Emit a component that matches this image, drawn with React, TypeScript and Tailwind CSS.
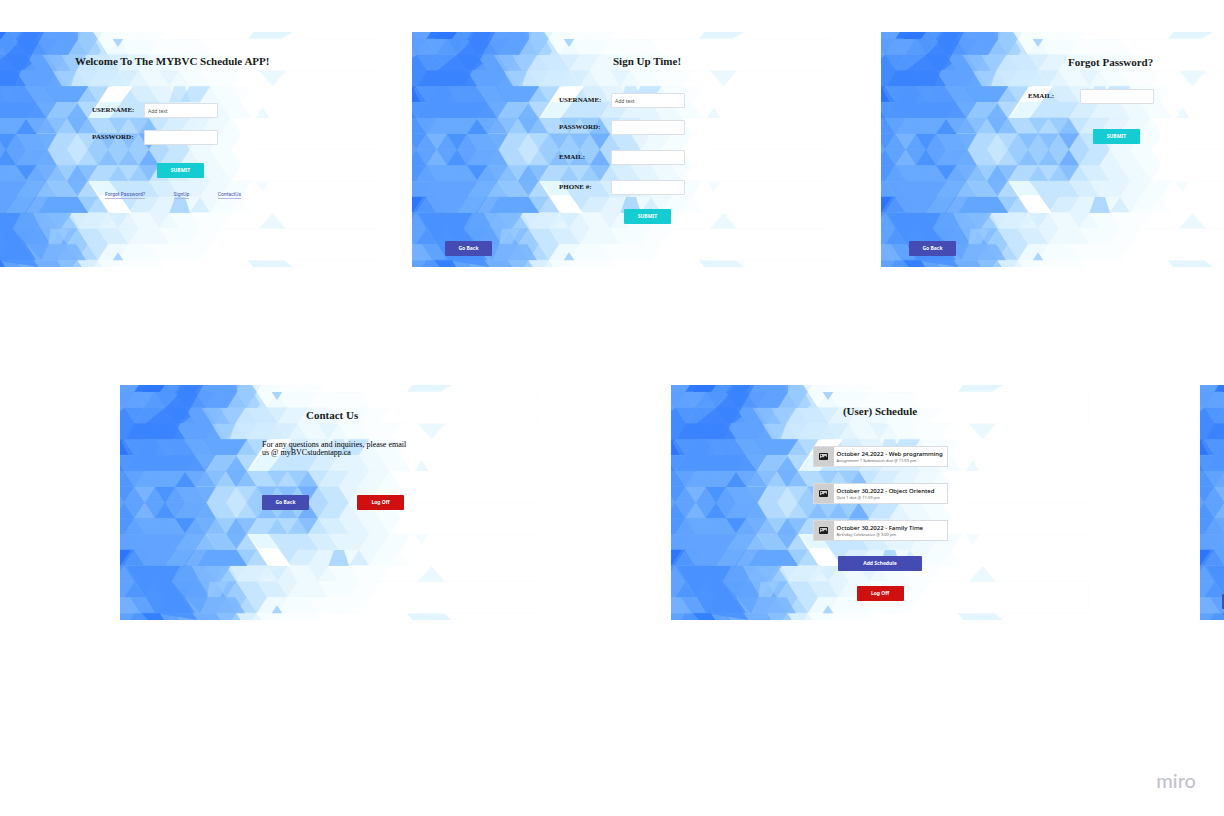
import type { InputHTMLAttributes, ReactNode } from "react";

const SHADES: Record<string, string> = {
  "0": "#307bff",
  "1": "#3f88ff",
  "2": "#5096ff",
  "3": "#5fa2ff",
  "4": "#72afff",
  "5": "#88bfff",
  "6": "#9ccdff",
  "7": "#b2daff",
  "8": "#c6e5ff",
  "9": "#d7eeff",
  a: "#e4f5ff",
  b: "#eefaff",
  c: "#f6fdff",
  d: "#fbfeff",
};

// One string per band of triangles, one shade per triangle, left to right.
// A dot leaves the white ground bare.
const BANDS = [
  "33300221144456accdddd",
  "333322211344568cbcccddddd",
  "32222211335667889aabbbcccdd",
  "2211111333457899a9abbabccddd",
  "012223223344467..899aab88bccd",
  "12222222346657..888899aaabbcc",
  "22333332445645776765899aabbc",
  "32343234457787656564788abbcc",
  "32343234457787656564788abbcc",
  "22333332445645776765899aabbc",
  "33333334456657..888899aaabbcc",
  "112333334444467..899aaab9bccd",
  "232222233456899a9abbabccddd",
  "33223222334568899abbbcccdd",
  "443332224445678bbcccddddd",
  "33222334444569accdddd",
];

const STEP = 30.65;
const BAND = 47.4;
const nodeX = (j: number) => 13 + STEP * j;
const lineY = (r: number) => 21 + BAND * (r - 1);

// Larger facets laid over the triangle bands: points, fill, opacity.
const FACETS: [string, string, number][] = [
  ["250,0 350,0 352,21 322,69 206,69", "#5a9cff", 0.75],
  ["352,0 388,0 420,58 412,69 345,69 322,69 352,21", "#94c8ff", 0.6],
  ["190,0 250,0 206,80 180,116 160,163 20,163 45,116 75,116 135,69 165,40", "#3982ff", 0.8],
  ["85,0 135,0 120,21 66,21", "#2d78ff", 1],
  ["105,21 135,69 75,69", "#5b9eff", 0.6],
  ["0,21 44,21 14,69 0,50", "#5b9dff", 0.6],
  ["0,78 14,69 45,116 20,163 0,163", "#3f88ff", 0.8],
  ["185,116 245,69 300,163 215,163", "#5fa2ff", 0.8],
  ["245,69 300,69 330,116 275,116", "#84bcff", 0.8],
  ["275,116 350,116 330,163 304,163", "#a4d1ff", 0.8],
  ["300,69 375,69 350,116 330,116", "#9bcbff", 0.8],
  ["375,69 440,69 500,163 330,163 345,116", "#cfeaff", 0.75],
  ["0,163 25,210 0,210", "#2c76ff", 1],
  ["75,163 190,163 255,258 20,258 20,250", "#4f95ff", 0.85],
  ["105,163 190,163 220,210 135,210", "#5a9dff", 0.5],
  ["190,163 250,163 285,210 257,258", "#69a9ff", 0.85],
  ["250,163 382,163 350,210 280,210", "#5fa5ff", 0.85],
  ["288,210 345,210 318,258 262,258", "#8ec4ff", 0.8],
  ["348,216 378,258 348,306 318,258", "#74b3ff", 0.9],
  ["75,258 257,258 226,306 45,306", "#69aaff", 0.85],
  ["195,262 226,306 165,306", "#4a93ff", 1],
  ["43,306 105,306 75,353", "#78b4ff", 0.9],
  ["105,306 165,306 135,353", "#4a93ff", 0.9],
  ["165,306 287,306 260,353 195,353", "#69aaff", 0.8],
  ["43,400 105,400 75,353", "#78b4ff", 0.9],
  ["105,400 165,400 135,353", "#4a93ff", 0.9],
  ["165,400 287,400 260,353 195,353", "#65a7ff", 0.8],
  ["75,448 257,448 226,400 45,400", "#69aaff", 0.85],
  ["195,444 226,400 165,400", "#4a93ff", 1],
  ["348,490 378,448 348,400 318,448", "#74b3ff", 0.9],
  ["288,495 345,495 318,448 262,448", "#8ec4ff", 0.8],
  ["40,448 200,448 130,543 100,543", "#62a4ff", 0.7],
  ["200,448 256,448 190,543 135,543", "#70b0ff", 0.7],
  ["262,495 350,495 382,543 232,543", "#5fa5ff", 0.85],
  ["0,495 32,495 0,543", "#2c76ff", 1],
  ["20,543 180,543 155,590 232,705 105,685 70,625", "#4890ff", 0.85],
  ["180,543 212,543 268,637 240,685 155,590", "#62a5ff", 0.8],
  ["215,543 332,543 268,637 240,590", "#7fb9ff", 0.85],
  ["330,543 480,543 420,590 355,590", "#dcf1ff", 0.7],
  ["268,590 325,590 300,637 262,637", "#9fceff", 0.6],
  ["262,637 346,637 375,685 240,685", "#78b4ff", 0.8],
  ["0,637 30,637 62,685 0,685", "#74b0ff", 0.9],
  ["66,685 120,685 132,705 84,705", "#3580ff", 1],
];

function Backdrop() {
  return (
    <svg
      aria-hidden="true"
      className="absolute inset-0 h-full w-full"
      viewBox="0 0 1254 705"
      preserveAspectRatio="none"
    >
      {BANDS.map((band, i) =>
        band.split("").map((shade, n) => {
          const fill = SHADES[shade];
          if (!fill) return null;
          const left = nodeX(n - 2);
          const mid = nodeX(n - 1);
          const right = nodeX(n);
          const up = n % 2 !== i % 2;
          const base = up ? lineY(i + 1) : lineY(i);
          const tip = up ? lineY(i) : lineY(i + 1);
          return (
            <polygon
              key={`${i}-${n}`}
              points={`${left},${base} ${right},${base} ${mid},${tip}`}
              fill={fill}
              stroke={fill}
              strokeWidth="2"
            />
          );
        }),
      )}
      {FACETS.map(([points, fill, opacity]) => (
        <polygon key={points} points={points} fill={fill} opacity={opacity} />
      ))}
      <g fill="#ffffff">
        <polygon points="455,163 516,163 445,258 384,258" />
        <polygon points="384,448 445,448 513,543 450,543" />
      </g>
      <g fill="#e6f8ff">
        <polygon points="420,210 482,210 445,258 384,258" />
        <polygon points="384,448 445,448 476,490 415,490" />
      </g>
      <g fill="#a9d5ff">
        <polygon points="455,21 487,21 471,45" />
        <polygon points="455,685 487,685 471,661" />
        <polygon points="640,163 672,163 687,210 625,210" opacity="0.5" />
        <polygon points="642,495 672,495 687,543 625,543" opacity="0.9" />
      </g>
      <g fill="#e3f6ff">
        <polygon points="877,0 996,0 960,21 860,21" />
        <polygon points="860,685 970,685 996,705 877,705" />
        <polygon points="893,116 975,116 935,163" opacity="0.7" />
        <polygon points="885,258 925,258 905,225" opacity="0.7" />
        <polygon points="885,448 925,448 905,481" opacity="0.4" />
        <polygon points="893,590 975,590 935,543" opacity="0.7" />
      </g>
      <g stroke="#f8fbfd" strokeWidth="2" fill="none">
        <path d="M640 21H1253V116H640M880 353H1253M800 448H1253M760 590H1253V685H900" />
      </g>
    </svg>
  );
}

function Screen({ label, children }: { label: string; children?: ReactNode }) {
  return (
    <section
      aria-label={label}
      className="relative h-[235px] w-[418px] shrink-0 overflow-hidden bg-white"
    >
      <Backdrop />
      <div className="relative h-full">{children}</div>
    </section>
  );
}

function Title({ children }: { children: ReactNode }) {
  return (
    <h2 className="font-['Liberation_Serif',serif] text-[11px] leading-4 font-bold whitespace-nowrap text-[#1a1a1a]">
      {children}
    </h2>
  );
}

type FieldProps = InputHTMLAttributes<HTMLInputElement> & { id: string; label: string };

function Field({ id, label, ...rest }: FieldProps) {
  return (
    <div className="flex h-[15px] items-center">
      <label
        htmlFor={id}
        className="w-[52px] shrink-0 font-['Liberation_Serif',serif] text-[7px] leading-none font-bold whitespace-nowrap text-[#111]"
      >
        {label}
      </label>
      <input
        id={id}
        className="h-[15px] w-[74px] rounded-[1px] border border-[#dcdfe6] bg-white px-[3px] font-['Noto_Sans',sans-serif] text-[5px] text-[#444] placeholder:text-[#555]"
        {...rest}
      />
    </div>
  );
}

const TONES = {
  teal: "bg-[#16ccd3] w-[47px]",
  indigo: "bg-[#444bb3] w-[47px]",
  red: "bg-[#cf0f10] w-[47px]",
  wide: "bg-[#444bb3] w-[84px]",
};

type ActionProps = { tone: keyof typeof TONES; label?: string; children?: ReactNode };

function Action({ tone, label, children }: ActionProps) {
  return (
    <button
      type="button"
      aria-label={label}
      className={`${TONES[tone]} flex h-[15px] items-center justify-center rounded-[1px] font-['Noto_Sans',sans-serif] text-[5px] leading-none font-bold whitespace-nowrap text-white`}
    >
      {children}
    </button>
  );
}

function TextLink({ children }: { children: ReactNode }) {
  return (
    <a
      href="#"
      className="border-b border-[#b4b8e6] font-['Roboto',sans-serif] text-[5px] leading-[7px] whitespace-nowrap text-[#4a50b8]"
    >
      {children}
    </a>
  );
}

function PictureIcon() {
  return (
    <svg viewBox="0 0 18 14" className="h-[7px] w-[9px]" aria-hidden="true">
      <rect width="18" height="14" rx="2" fill="#1c1c1c" />
      <path d="M2.200 2.200H15.800V8.500L12.300 4.800 8.300 9 6.300 7.400 2.200 11Z" fill="#cfcfcf" />
      <circle cx="5" cy="4.800" r="1.500" fill="#1c1c1c" />
    </svg>
  );
}

function ScheduleCard({ title, detail }: { title: string; detail: string }) {
  return (
    <li className="flex h-[21px] w-[135px] border border-[#d9dbe0] bg-white">
      <span className="flex w-5 shrink-0 items-center justify-center bg-[#cfcfcf]">
        <PictureIcon />
      </span>
      <div className="flex flex-col pt-1 pl-[3px] font-['Noto_Sans',sans-serif] whitespace-nowrap">
        <p className="text-[6px] leading-[7px] font-medium text-black">{title}</p>
        <p className="text-[4px] leading-[5px] text-[#666]">{detail}</p>
      </div>
    </li>
  );
}

export default function App() {
  return (
    <main className="flex min-h-screen flex-col overflow-hidden bg-white pt-8">
      <div className="-ml-[39px] flex">
        <Screen label="Log in">
          <form className="pt-[21px]">
            <div className="pl-[114px]">
              <Title>Welcome To The MYBVC Schedule APP!</Title>
            </div>
            <div className="flex flex-col gap-3 pt-[34px] pl-[131px]">
              <Field id="login-user" label="USERNAME:" placeholder="Add text" />
              <Field id="login-pass" label="PASSWORD:" type="password" />
            </div>
            <div className="pt-[18px] pl-[196px]">
              <Action tone="teal">SUBMIT</Action>
            </div>
            <nav className="flex justify-between pt-[13px] pr-[138px] pl-36">
              <TextLink>Forgot Password?</TextLink>
              <TextLink>SignUp</TextLink>
              <TextLink>ContactUs</TextLink>
            </nav>
          </form>
        </Screen>
        <div className="ml-[33px]">
          <Screen label="Sign up">
            <form className="pt-[21px]">
              <div className="pl-[201px]">
                <Title>Sign Up Time!</Title>
              </div>
              <div className="flex flex-col gap-[15px] pt-6 pl-[147px]">
                <div className="flex flex-col gap-3">
                  <Field id="join-user" label="USERNAME:" placeholder="Add text" />
                  <Field id="join-pass" label="PASSWORD:" type="password" />
                </div>
                <Field id="join-email" label="EMAIL:" type="email" />
                <Field id="join-phone" label="PHONE #:" type="tel" />
              </div>
              <div className="pt-[14px] pl-[212px]">
                <Action tone="teal">SUBMIT</Action>
              </div>
              <div className="pt-[17px] pl-[33px]">
                <Action tone="indigo">Go Back</Action>
              </div>
            </form>
          </Screen>
        </div>
        <div className="ml-[51px]">
          <Screen label="Forgot password">
            <form className="pt-[22px]">
              <div className="pl-[187px]">
                <Title>Forgot Password?</Title>
              </div>
              <div className="pt-[19px] pl-[147px]">
                <Field id="reset-email" label="EMAIL:" type="email" />
              </div>
              <div className="pt-[25px] pl-[212px]">
                <Action tone="teal">SUBMIT</Action>
              </div>
              <div className="pt-[97px] pl-7">
                <Action tone="indigo">Go Back</Action>
              </div>
            </form>
          </Screen>
        </div>
      </div>

      <div className="flex pt-[118px] pl-[120px]">
        <Screen label="Contact us">
          <div className="pt-[22px] pl-[142px]">
            <div className="pl-11">
              <Title>Contact Us</Title>
            </div>
            <p className="pt-[18px] font-['Liberation_Serif',serif] text-[8px] leading-2 whitespace-nowrap text-black">
              For any questions and inquiries, please email
              <br />
              us @ myBVCstudentapp.ca
            </p>
            <div className="flex gap-12 pt-[38px]">
              <Action tone="indigo">Go Back</Action>
              <Action tone="red">Log Off</Action>
            </div>
          </div>
        </Screen>
        <div className="ml-[133px]">
          <Screen label="User schedule">
            <div className="flex flex-col items-center pt-[18px]">
              <Title>(User) Schedule</Title>
              <ul className="flex flex-col gap-4 pt-[27px]">
                <ScheduleCard
                  title="October 24,2022 - Web programming"
                  detail="Assignment 1 Submission due @ 11:59 pm"
                />
                <ScheduleCard
                  title="October 30,2022 - Object Oriented"
                  detail="Quiz 1 due @ 11:59 pm"
                />
                <ScheduleCard
                  title="October 30,2022 - Family Time"
                  detail="Birthday Celebration @ 3:00 pm"
                />
              </ul>
              <div className="pt-[15px]">
                <Action tone="wide">Add Schedule</Action>
              </div>
              <div className="pt-[15px]">
                <Action tone="red">Log Off</Action>
              </div>
            </div>
          </Screen>
        </div>
        <div className="ml-[111px]">
          <Screen label="Add schedule">
            <div className="pt-[209px] pl-[22px]">
              <Action tone="indigo" label="Go back" />
            </div>
          </Screen>
        </div>
      </div>

      <footer className="mt-auto flex justify-end pr-7 pb-6">
        <span className="font-['Lato',sans-serif] text-[20px] leading-6 font-medium text-[#c3c3cb]">
          miro
        </span>
      </footer>
    </main>
  );
}
